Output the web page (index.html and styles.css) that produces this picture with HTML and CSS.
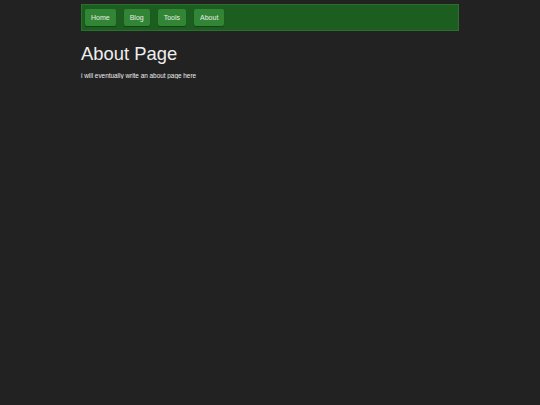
FILE: index.html
```html
<!DOCTYPE html>
<html>
<head>
    <title>About</title>
    <meta name="viewport" content="width=device-width, initial-scale=1">
    <link rel="stylesheet" href="styles.css">
</head>
<body>
    <div class="page">
        <nav class="navbar">
            <a class="nav-btn" href="#">Home</a>
            <a class="nav-btn" href="#">Blog</a>
            <a class="nav-btn" href="#">Tools</a>
            <a class="nav-btn" href="#">About</a>
        </nav>
        <h1 class="title">About Page</h1>
        <p class="text">i will eventually write an about page here</p>
    </div>
</body>
</html>
```

FILE: styles.css
```css
body {
    margin: 0;
    background: #222222;
    color: #eeeeee;
    font-family: "Liberation Sans", Arial, sans-serif;
}
.page {
    width: 70%;
    margin: 0 auto;
    padding-top: 4px;
}
.navbar {
    display: flex;
    gap: 8px;
    padding: 4px 3px;
    background: #1b5e20;
    border: 1px solid #2a6f2d;
}
.nav-btn {
    display: block;
    height: 17px;
    box-sizing: border-box;
    padding: 0 6px;
    line-height: 17px;
    font-size: 7px;
    color: #e6eee6;
    text-decoration: none;
    background: #318535;
    border-radius: 2px;
    box-shadow: 0 1px 1px rgba(0, 0, 0, 0.3);
}
.title {
    margin: 11.5px 0 0;
    font-size: 18.4px;
    font-weight: normal;
    line-height: 21px;
}
.text {
    margin: 8px 0 0;
    font-size: 6.4px;
    line-height: 7px;
}
```
